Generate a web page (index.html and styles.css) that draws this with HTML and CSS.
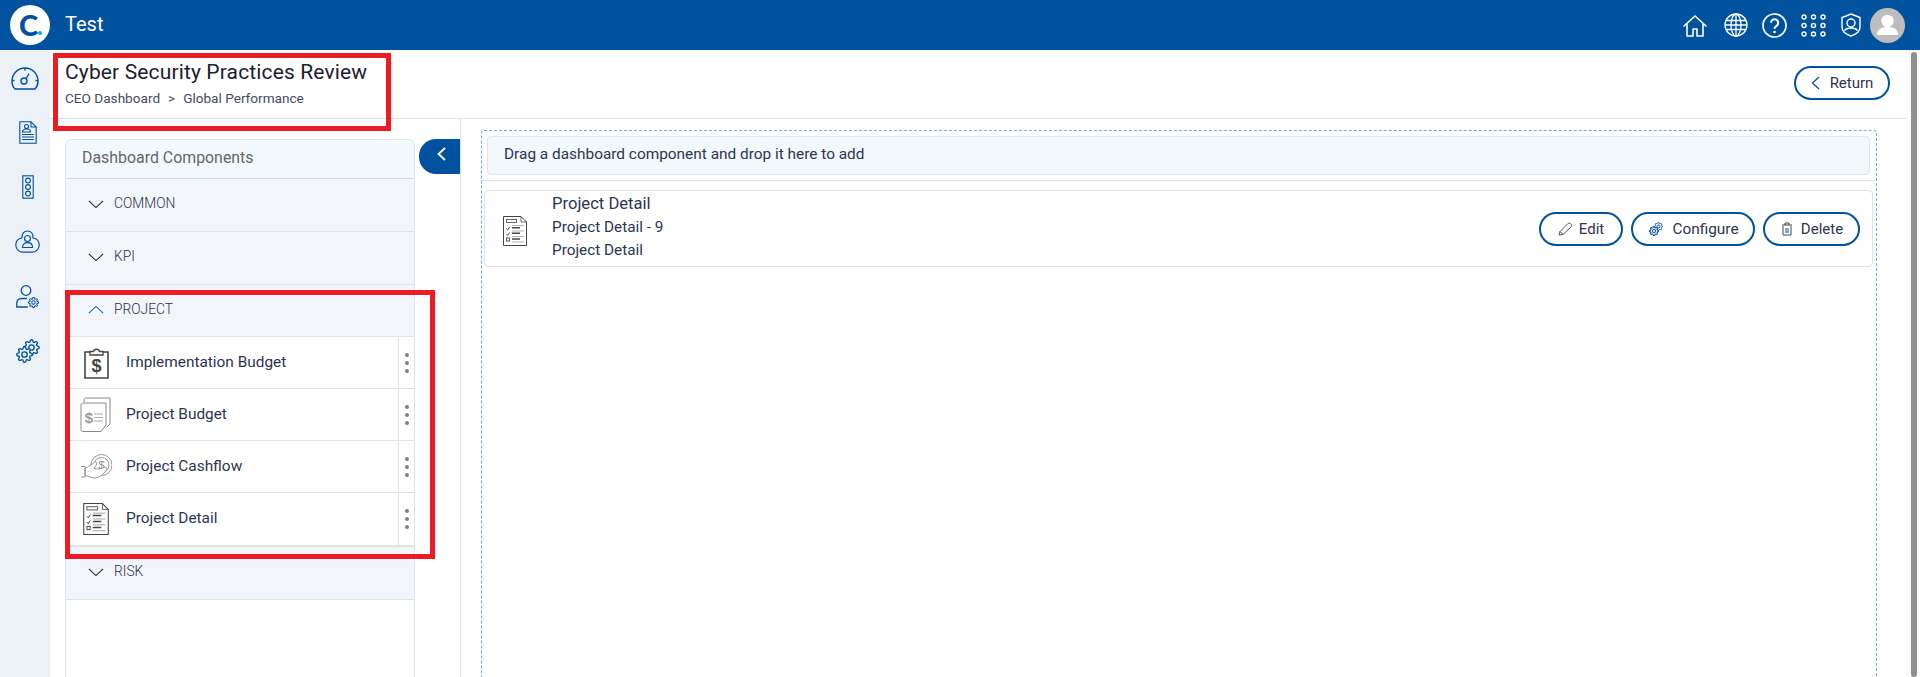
FILE: index.html
```html
<!DOCTYPE html>
<html lang="en">
<head>
<meta charset="utf-8">
<title>Cyber Security Practices Review</title>
<link rel="stylesheet" href="styles.css">
</head>
<body>
<svg class="defs" width="0" height="0" aria-hidden="true">
  <defs>
    <symbol id="i-detail" viewBox="0 0 24 30">
      <path d="M.5.5H18L23.500 6V29.500H.5Z" fill="none" stroke="#444" stroke-width="1"/>
      <path d="M18 .5V6H23.500" fill="none" stroke="#444" stroke-width=".8"/>
      <rect x="3.500" y="3.500" width="10" height="3" fill="none" stroke="#555" stroke-width=".9"/>
      <path d="M3.500 12.500l1.200 1.400 2-3M3.500 18l1.200 1.400 2-3" fill="none" stroke="#333" stroke-width=".9"/>
      <rect x="3.500" y="22" width="3" height="3" fill="none" stroke="#444" stroke-width=".9"/>
      <path d="M9 9.500H21M9 15H21M9 20.500H21M9 26H21" stroke="#999" stroke-width=".8"/>
      <path d="M9 11.800H17M9 17.300H17M9 23H17" stroke="#444" stroke-width="1.400"/>
    </symbol>
    <symbol id="gear" viewBox="0 0 24 24">
      <path d="M19.400 15a1.650 1.650 0 0 0 .33 1.820l.06.06a2 2 0 0 1 0 2.830 2 2 0 0 1-2.830 0l-.06-.06a1.650 1.650 0 0 0-1.820-.33 1.650 1.650 0 0 0-1 1.510V21a2 2 0 0 1-2 2 2 2 0 0 1-2-2v-.09A1.650 1.650 0 0 0 9 19.400a1.650 1.650 0 0 0-1.820.33l-.06.06a2 2 0 0 1-2.830 0 2 2 0 0 1 0-2.830l.06-.06a1.650 1.650 0 0 0 .33-1.820 1.650 1.650 0 0 0-1.510-1H3a2 2 0 0 1-2-2 2 2 0 0 1 2-2h.09A1.650 1.650 0 0 0 4.600 9a1.650 1.650 0 0 0-.33-1.820l-.06-.06a2 2 0 0 1 0-2.830 2 2 0 0 1 2.830 0l.06.06a1.650 1.650 0 0 0 1.820.33H9a1.650 1.650 0 0 0 1-1.510V3a2 2 0 0 1 2-2 2 2 0 0 1 2 2v.09a1.650 1.650 0 0 0 1 1.510 1.650 1.650 0 0 0 1.820-.33l.06-.06a2 2 0 0 1 2.830 0 2 2 0 0 1 0 2.830l-.06.06a1.650 1.650 0 0 0-.33 1.820V9a1.650 1.650 0 0 0 1.510 1H21a2 2 0 0 1 2 2 2 2 0 0 1-2 2h-.09a1.650 1.650 0 0 0-1.510 1z"/>
      <circle cx="12" cy="12" r="3.800"/>
    </symbol>
  </defs>
</svg>

<header class="topbar">
  <div class="brand"><span class="brand-c">C</span><span class="brand-dot"></span></div>
  <div class="app-name">Test</div>
  <nav class="top-icons">
    <svg class="ti ti-home" viewBox="0 0 24 22"><path d="M1 11 12 1l11 10M4 9v12h6v-7h4v7h6V9" fill="none" stroke="#fff" stroke-width="1.600" stroke-linejoin="round" stroke-linecap="round"/></svg>
    <svg class="ti ti-globe" viewBox="0 0 24 24"><g fill="none" stroke="#fff" stroke-width="1.300"><circle cx="12" cy="12" r="11"/><ellipse cx="12" cy="12" rx="5" ry="11"/><path d="M12 1v22M2 7.500h20M1 12h22M2 16.500h20"/></g></svg>
    <svg class="ti ti-help" viewBox="0 0 25 25"><circle cx="12.500" cy="12.500" r="11.500" fill="none" stroke="#fff" stroke-width="1.700"/><path d="M9 9.800a3.600 3.600 0 1 1 5.600 3c-1.400.9-2.100 1.600-2.100 3" fill="none" stroke="#fff" stroke-width="2"/><circle cx="12.500" cy="19" r="1.300" fill="#fff"/></svg>
    <svg class="ti ti-grid" viewBox="0 0 25 23"><g fill="none" stroke="#fff" stroke-width="1.400"><circle cx="3" cy="3" r="2"/><circle cx="12.500" cy="3" r="2"/><circle cx="22" cy="3" r="2"/><circle cx="3" cy="11.500" r="2"/><circle cx="12.500" cy="11.500" r="2"/><circle cx="22" cy="11.500" r="2"/><circle cx="3" cy="20" r="2"/><circle cx="12.500" cy="20" r="2"/><circle cx="22" cy="20" r="2"/></g></svg>
    <svg class="ti ti-shield" viewBox="0 0 20 24"><path d="M10 1 19 4.500V14C19 18.500 14.500 21.500 10 23 5.500 21.500 1 18.500 1 14V4.500Z" fill="none" stroke="#fff" stroke-width="1.400"/><circle cx="10" cy="10" r="4" fill="none" stroke="#fff" stroke-width="1.400"/><path d="M3.500 17.500C5 15.500 7.500 15 10 15s5 .5 6.500 2.500" fill="none" stroke="#fff" stroke-width="1.400"/></svg>
    <div class="avatar"><svg viewBox="0 0 35 35"><circle cx="17.500" cy="13" r="6.200" fill="#fff"/><path d="M7 27c0-5.500 3.500-8 10.500-8s10.500 2.500 10.500 8Z" fill="#fff"/></svg></div>
  </nav>
</header>

<div class="shell">
  <aside class="rail">
    <svg class="ri ri-gauge" viewBox="0 0 28 23"><g fill="none" stroke="#00529f" stroke-width="1.400"><path d="M4 22C1.500 19.500 1 17 1 14 1 6.500 7 1 14 1S27 6.500 27 14c0 3-.5 5.500-3 8Z"/><circle cx="13" cy="14" r="3"/><path d="M15 12 18 6.500M1 13.500h2.500M24.500 13.500H27M14 1V3.500"/></g></svg>
    <svg class="ri ri-doc" viewBox="0 0 18 23"><g fill="none" stroke="#00529f" stroke-width="1.100"><path d="M.8.8H12L17.200 6V22.200H.8Z"/><path d="M12 .8V6H17.200"/><circle cx="7.500" cy="5.500" r="2"/><path d="M3.500 11c0-2 1.500-3 4-3s4 1 4 3ZM3 13.500H15M3 16H15M3 18.500H15"/></g></svg>
    <svg class="ri ri-light" viewBox="0 0 12 24"><g fill="none" stroke="#00529f" stroke-width="1.100"><rect x=".8" y=".8" width="10.400" height="22.400"/><circle cx="6" cy="5.500" r="2.400"/><circle cx="6" cy="12" r="2.400"/><circle cx="6" cy="18.500" r="2.400"/></g></svg>
    <svg class="ri ri-trio" viewBox="0 0 25 23"><g fill="none" stroke="#00529f" stroke-width="1.200"><path d="M12.500 1c3.800 0 5.600 3 5.600 7 3.800.6 6.100 3.200 6.100 7 0 4.200-3.300 7.200-7.200 7.200H8C4.100 22.200.8 19.200.8 15c0-3.800 2.300-6.400 6.100-7C6.900 4 8.700 1 12.500 1Z"/><circle cx="12.500" cy="8.500" r="3"/><path d="M7.500 17.500c0-3.300 2-4.800 5-4.800s5 1.500 5 4.800Z"/></g></svg>
    <svg class="ri ri-user" viewBox="0 0 23 23"><g fill="none" stroke="#00529f" stroke-width="1.300"><circle cx="10" cy="5.500" r="4.800"/><path d="M11 13.500H5.500C2.500 13.500 .8 15.500.8 18v4h11"/></g><use href="#gear" class="gear-rail" x="12" y="12" width="11" height="11"/></svg>
    <svg class="ri ri-gear" viewBox="0 0 24 24"><use href="#gear" class="gear-rail-b" x="7" y="0" width="17" height="17"/><use href="#gear" class="gear-rail-f" x="0" y="7" width="17" height="17"/></svg>
  </aside>

  <main class="page">
    <div class="page-head">
      <div>
        <h1 class="title">Cyber Security Practices Review</h1>
        <p class="crumbs"><span>CEO Dashboard</span><span class="sep">&gt;</span><span>Global Performance</span></p>
      </div>
      <button class="pill pill-return"><svg class="chev-l" viewBox="0 0 9 14"><path d="M8 1 1.500 7 8 13" fill="none" stroke="#00529f" stroke-width="1.300"/></svg>Return</button>
    </div>

    <div class="workspace">
      <section class="left">
        <div class="panel">
          <div class="panel-head">Dashboard Components</div>
          <div class="acc"><svg class="caret" viewBox="0 0 18 10"><path d="M1 1.500 9 9l8-7.500" fill="none" stroke="#222" stroke-width="1.200"/></svg>COMMON</div>
          <div class="acc"><svg class="caret" viewBox="0 0 18 10"><path d="M1 1.500 9 9l8-7.500" fill="none" stroke="#222" stroke-width="1.200"/></svg>KPI</div>
          <div class="acc acc-open"><svg class="caret" viewBox="0 0 18 10"><path d="M1 8.500 9 1l8 7.500" fill="none" stroke="#1668d8" stroke-width="1.200"/></svg>PROJECT</div>
          <div class="rows">
            <div class="row">
              <div class="row-main">
                <svg class="comp-icon" viewBox="0 0 32 32"><g fill="none" stroke="#444" stroke-width="1.600"><path d="M10 5H5V31H28V5H23"/><path d="M10 8V4.500H13.500C14 1.500 19 1.500 19.500 4.500H23V8Z" stroke-width="1.300"/></g><text class="dollar" x="16.500" y="25" text-anchor="middle">$</text></svg>
                <span>Implementation Budget</span>
              </div>
              <div class="dots"><i></i><i></i><i></i></div>
            </div>
            <div class="row">
              <div class="row-main">
                <svg class="comp-icon comp-wide" viewBox="0 0 32 36"><g fill="none" stroke="#888" stroke-width="1"><path d="M4 5V2.500C4 1.500 5 1 6 1H30V27L27 30"/><path d="M3 6H26V28L21 34.500H3C2 34.500 1 33.500 1 32.500V8C1 7 2 6 3 6Z"/></g><text class="dollar-s" x="9" y="26" text-anchor="middle">$</text><path d="M14 17H23M14 20.500H23M14 24H23" stroke="#aaa" stroke-width="1.200"/></svg>
                <span>Project Budget</span>
              </div>
              <div class="dots"><i></i><i></i><i></i></div>
            </div>
            <div class="row">
              <div class="row-main">
                <svg class="comp-icon comp-wide" viewBox="0 0 32 26"><g fill="none" stroke="#8a8a8a" stroke-width=".9"><circle cx="21.500" cy="11" r="10.500"/><circle cx="21.500" cy="11" r="7.500"/></g><text class="dollar-c" x="21.500" y="15" text-anchor="middle">$</text><path class="hand" d="M5 14.500C8 12 12 11.500 15 7.500c2 0 2.500 2 1 4L14 14.500c3 1 7 .5 10-1 2.500-1 3.500 1 2 3-3 4-6 7-11 7.500-4 .3-7-2.500-10-2.500Z"/><path d="M1 12.500H5V23H1" fill="none" stroke="#8a8a8a" stroke-width=".9"/></svg>
                <span>Project Cashflow</span>
              </div>
              <div class="dots"><i></i><i></i><i></i></div>
            </div>
            <div class="row">
              <div class="row-main">
                <svg class="comp-icon"><use href="#i-detail"/></svg>
                <span>Project Detail</span>
              </div>
              <div class="dots"><i></i><i></i><i></i></div>
            </div>
          </div>
          <div class="acc acc-risk"><svg class="caret" viewBox="0 0 18 10"><path d="M1 1.500 9 9l8-7.500" fill="none" stroke="#222" stroke-width="1.200"/></svg>RISK</div>
        </div>
        <button class="collapse" aria-label="Collapse"><svg viewBox="0 0 9 14"><path d="M8 1 1.500 7 8 13" fill="none" stroke="#fff" stroke-width="1.800"/></svg></button>
      </section>

      <section class="canvas">
        <div class="dropzone">
          <div class="hint">Drag a dashboard component and drop it here to add</div>
          <div class="hint-rule"></div>
          <article class="card">
            <svg class="card-icon"><use href="#i-detail"/></svg>
            <div class="card-text">
              <div class="card-title">Project Detail</div>
              <div class="card-sub">Project Detail - 9</div>
              <div class="card-sub">Project Detail</div>
            </div>
            <div class="card-actions">
              <button class="pill pill-edit"><svg class="btn-i" viewBox="0 0 14 14"><path d="M1 13 2 9.500 10 1.500C11 .8 12.200 1 13 2s.8 2 0 3L5 12.500Z" fill="none" stroke="#555" stroke-width="1"/><path d="M2 9.500 4.500 12" stroke="#00529f" stroke-width="1"/></svg>Edit</button>
              <button class="pill pill-conf"><svg class="btn-i" viewBox="0 0 14 14"><use href="#gear" class="gear-btn-b" x="5" y="0" width="9" height="9"/><use href="#gear" class="gear-btn-f" x="0" y="4" width="10" height="10"/></svg>Configure</button>
              <button class="pill pill-del"><svg class="btn-i" viewBox="0 0 12 14"><path d="M2 4V13H10V4M1 3H11M4 3V1H8V3" fill="none" stroke="#444" stroke-width="1"/><path d="M5 6V11M7 6V11" stroke="#00529f" stroke-width="1"/></svg>Delete</button>
            </div>
          </article>
        </div>
      </section>
    </div>
  </main>
  <div class="scrolltrack"><div class="scrollthumb"></div></div>
</div>

<div class="mark mark-a"></div>
<div class="mark mark-b"></div>
</body>
</html>
```

FILE: styles.css
```css
* { box-sizing: border-box; }
html, body { margin: 0; height: 677px; overflow: hidden; background: #fff; }
body { font-family: Roboto, "Liberation Sans", sans-serif; color: #2c3550; position: relative; }
.defs { position: absolute; }
button { font: inherit; cursor: pointer; }

.topbar { height: 50px; background: #00529f; display: flex; align-items: center; padding-left: 10px; color: #fff; }
.brand { width: 40px; height: 40px; border-radius: 50%; background: #fff; position: relative; text-align: center; line-height: 40px; }
.brand-c { font-family: Lato, sans-serif; font-weight: 900; font-size: 29px; color: #00529f; display: inline-block; margin-left: -3px; }
.brand-dot { position: absolute; left: 28px; top: 26px; width: 4px; height: 4px; border-radius: 50%; background: #0aa5e8; }
.app-name { margin-left: 15px; font-size: 20px; margin-top: -3px; }
.top-icons { margin-left: auto; display: flex; align-items: center; margin-right: 15px; }
.ti { display: block; }
.ti-home { width: 24px; height: 22px; margin-top: 2px; }
.ti-globe { width: 24px; height: 24px; margin-left: 17px; }
.ti-help { width: 25px; height: 25px; margin-left: 14px; }
.ti-grid { width: 25px; height: 23px; margin-left: 14px; }
.ti-shield { width: 20px; height: 24px; margin-left: 15px; }
.avatar { width: 35px; height: 35px; border-radius: 50%; background: #bdbdbd; margin-left: 9px; }
.avatar svg { display: block; width: 35px; height: 35px; }

.shell { display: flex; height: 627px; }
.rail { width: 50px; flex: none; background: #ecf0f7; display: grid; grid-auto-rows: 54.500px; align-content: start; justify-items: center; align-items: center; padding: 1px 0 0 5px; }
.ri-gauge { width: 28px; height: 23px; margin-left: -5px; }
.ri-doc { width: 18px; height: 23px; }
.ri-light { width: 12px; height: 24px; }
.ri-trio { width: 25px; height: 23px; }
.ri-user { width: 23px; height: 23px; }
.ri-gear { width: 24px; height: 24px; }
.gear-rail { fill: #ecf0f7; stroke: #00529f; stroke-width: 2.200; }
.gear-rail-b { fill: none; stroke: #00529f; stroke-width: 1.900; }
.gear-rail-f { fill: #ecf0f7; stroke: #00529f; stroke-width: 1.900; }
.page { flex: 1; min-width: 0; display: flex; flex-direction: column; }
.page-head { height: 69px; flex: none; border-bottom: 1px solid #dedede; display: flex; justify-content: space-between; padding: 9px 16px 0 15px; }
.title { margin: 0; font-size: 21px; font-weight: 400; letter-spacing: .14px; line-height: 27px; color: #1a2030; }
.crumbs { margin: 4px 0 0; font-size: 13.600px; line-height: 16px; color: #444b5e; display: flex; }
.sep { margin: 0 8px; }

.pill { display: inline-flex; align-items: center; justify-content: center; height: 34px; background: #fff; border: 2px solid #00529f; border-radius: 17px; color: #2f3450; font-size: 15px; padding: 0; }
.pill-return { width: 96px; margin-top: 7px; gap: 10px; }
.chev-l { width: 9px; height: 14px; }

.workspace { flex: 1; display: flex; min-height: 0; }
.left { width: 411px; flex: none; border-right: 1px solid #dedede; display: flex; align-items: flex-start; padding: 20px 0 0 15px; gap: 4px; }
.panel { width: 350px; flex: none; height: 560px; border: 1px solid #dfe2e8; border-radius: 6px 6px 0 0; }
.panel-head { height: 39px; background: #f2f9fd; border-bottom: 1px solid #d6d9df; padding-left: 16px; line-height: 36px; font-size: 15.900px; color: #666; border-radius: 6px 6px 0 0; }
.acc { height: 53px; background: #f2f5fa; border-bottom: 1px solid #dfe2e8; display: flex; align-items: flex-start; padding: 16px 0 0 22px; font-size: 13.800px; font-weight: 300; line-height: 16px; color: #2c3150; gap: 10px; }
.acc-open { height: 52px; }
.caret { width: 16px; height: 10px; margin-top: 4px; flex: none; }
.rows { border-bottom: 2px solid #dfe2e8; }
.row { height: 52px; display: flex; border-bottom: 1px solid #e2e2e2; background: #fff; }
.row:last-child { border-bottom: 0; }
.row-main { flex: 1; display: flex; align-items: center; padding-left: 14px; gap: 14px; font-size: 15.400px; color: #2c3550; border-right: 1px solid #e2e2e2; }
.row-main span { margin-top: -2px; }
.comp-icon { width: 32px; height: 32px; flex: none; }
.comp-wide { height: 36px; }
.hand { fill: #fff; stroke: #8a8a8a; stroke-width: .9; }
.dollar { font-family: "Liberation Sans", sans-serif; font-size: 18px; font-weight: 700; fill: #444; }
.dollar-s { font-family: "Liberation Sans", sans-serif; font-size: 15px; font-weight: 700; fill: #999; }
.dollar-c { font-family: "Liberation Sans", sans-serif; font-size: 11px; fill: #888; }
.dots { width: 15px; flex: none; display: flex; flex-direction: column; align-items: center; justify-content: center; gap: 4px; }
.dots i { width: 4px; height: 4px; border-radius: 50%; background: #808080; }

.collapse { width: 41px; height: 35px; flex: none; background: #00529f; border: 0; padding: 0 0 0 3px; border-radius: 17px 0 0 17px; display: flex; align-items: center; justify-content: center; margin-right: -1px; }
.collapse svg { width: 9px; height: 14px; margin-top: -5px; }

.canvas { flex: 1; min-width: 0; padding: 11px 0 0 20px; }
.dropzone { width: 1396px; height: 560px; border: 1px dashed #75a8e6; border-bottom: 0; border-radius: 3px 3px 0 0; padding: 5px 6px 0 5px; }
.hint { height: 39px; background: #f2f9fd; border: 1px solid #e1e6ea; border-radius: 4px; padding-left: 16px; line-height: 35px; font-size: 15.400px; color: #2c3550; }
.hint-rule { height: 1px; background: #e0e0e0; margin: 5px -5px 0 -5px; }
.card { height: 77px; margin: 9px -3px 0 -3px; border: 1px solid #e2e2e2; border-radius: 4px; display: flex; align-items: center; padding: 0 12px 0 18px; }
.card-icon { width: 24px; height: 30px; flex: none; margin-top: 4px; }
.card-text { margin-left: 25px; color: #2c3550; }
.card-title { font-size: 16.600px; line-height: 22px; margin: -4px 0 1px; }
.card-sub { font-size: 15.300px; line-height: 22px; }
.card-sub:last-child { margin-top: 1px; }
.card-actions { margin-left: auto; display: flex; gap: 8px; }
.btn-i { width: 14px; height: 14px; }
.gear-btn-b { fill: none; stroke: #00529f; stroke-width: 2.500; }
.gear-btn-f { fill: #fff; stroke: #00529f; stroke-width: 2.500; }
.pill-edit { width: 84px; gap: 7px; }
.pill-conf { width: 124px; gap: 9px; font-size: 15.400px; padding-left: 2px; }
.pill-del { width: 97px; gap: 7px; }

.scrolltrack { width: 14px; flex: none; padding: 2px 3px 0 5px; }
.scrollthumb { height: 100%; background: #909090; border-radius: 3px; }

.mark { position: absolute; border: 5px solid #ed1c24; pointer-events: none; }
.mark-a { left: 53px; top: 53px; width: 338px; height: 78px; }
.mark-b { left: 65px; top: 290px; width: 370px; height: 269px; }
```
